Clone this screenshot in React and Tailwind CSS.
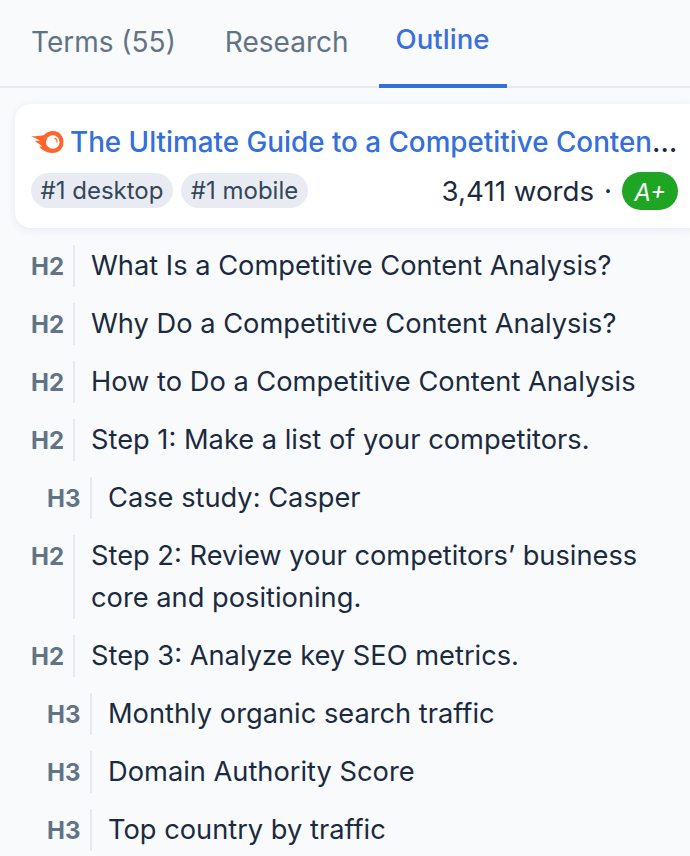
import React from "react";

const outline = [
  { tag: "H2", text: "What Is a Competitive Content Analysis?" },
  { tag: "H2", text: "Why Do a Competitive Content Analysis?" },
  { tag: "H2", text: "How to Do a Competitive Content Analysis" },
  { tag: "H2", text: "Step 1: Make a list of your competitors." },
  { tag: "H3", text: "Case study: Casper" },
  { tag: "H2", text: "Step 2: Review your competitors’ business core and positioning." },
  { tag: "H2", text: "Step 3: Analyze key SEO metrics." },
  { tag: "H3", text: "Monthly organic search traffic" },
  { tag: "H3", text: "Domain Authority Score" },
  { tag: "H3", text: "Top country by traffic" },
];

function Logo() {
  return (
    <svg width="33" height="22" viewBox="0 0 33 22" className="shrink-0">
      <path d="M0 5 C5 5.500 9 5 13 4 C15.500 1.500 18.500 0 22 0 C28 0 32.500 4.800 32.500 11 C32.500 17.500 28 22 21.500 22 C15.500 22 11 19 8 15.500 L11.500 15.500 C9 13.500 6.500 11.800 4 10 L9 9.500 C6 8 3 6.500 0 5 Z" fill="#ff642d" />
      <circle cx="21.800" cy="11" r="6.800" fill="#fff" />
      <path d="M23.500 7 A4.300 4.300 0 0 1 26 11.500" fill="none" stroke="#ff642d" strokeWidth="1.100" />
    </svg>
  );
}

function Row({ tag, text }) {
  const sub = tag === "H3";
  return (
    <div className={`flex items-stretch ${sub ? "pl-[47px]" : "pl-[31px]"}`}>
      <div className={`${sub ? "w-[43px]" : "w-[42px]"} pt-[8px] text-[24px] leading-[28px] font-bold text-[#627386] shrink-0`}>{tag}</div>
      <div className="border-l-2 border-[#e6eaf0] pl-[16px] text-[27.250px] leading-[42px] text-[#1b2b3f] w-[570px]">{text}</div>
    </div>
  );
}

export default function App() {
  return (
    <div className="w-[690px] h-[856px] overflow-hidden bg-[#f9fafc] font-['Inter',sans-serif] antialiased">
      <div className="h-[88px] flex pl-[15px] border-b-2 border-[#e7ecf3]">
        <div className="px-[16px] pt-[22px] text-[28px] leading-[40px] text-[#627386]">Terms (55)</div>
        <div className="ml-[17px] px-[16px] pt-[22px] text-[28px] leading-[40px] text-[#627386]">Research</div>
        <div className="ml-[14px] h-[88px] w-[128px] text-center pt-[19px] text-[27.600px] leading-[40px] font-medium text-[#3a6fdc] border-b-4 border-[#356fdb]">Outline</div>
      </div>

      <div className="ml-[15px] mt-[16px] h-[124px] w-[690px] bg-white rounded-[16px] shadow-[0_2px_10px_rgba(30,50,90,0.08)] pl-[16px] pr-[27px] pt-[18px]">
        <div className="flex items-center gap-[6px] w-[650px]">
          <Logo />
          <div className="truncate text-[27.800px] leading-[40px] font-medium text-[#1b2b3f]">
            <span className="text-[#356fdb]">The Ultimate Guide to a Competitive Content Analysis</span>
          </div>
        </div>
        <div className="mt-[9px] flex items-center w-[647px]">
          <span className="h-[35px] w-[142px] text-center rounded-full bg-[#e8ecf2] text-[24px] leading-[35px] text-[#33465a]">#1 desktop</span>
          <span className="ml-[8px] h-[35px] w-[127px] text-center rounded-full bg-[#e8ecf2] text-[24px] leading-[35px] text-[#33465a]">#1 mobile</span>
          <span className="ml-auto text-[27.700px] leading-[38px] text-[#1b2b3f] pt-[1px]">3,411 words</span>
          <span className="ml-[10px] text-[27.700px] leading-[38px] text-[#1b2b3f] pt-[1px]">·</span>
          <span className="ml-[10px] h-[38px] w-[56px] rounded-full bg-[#1fa524] text-center text-[24px] leading-[41px] italic text-white">A+</span>
        </div>
      </div>

      <div className="mt-[17px] flex flex-col gap-[16px]">
        {outline.map((o) => (
          <Row key={o.text} tag={o.tag} text={o.text} />
        ))}
      </div>
    </div>
  );
}
